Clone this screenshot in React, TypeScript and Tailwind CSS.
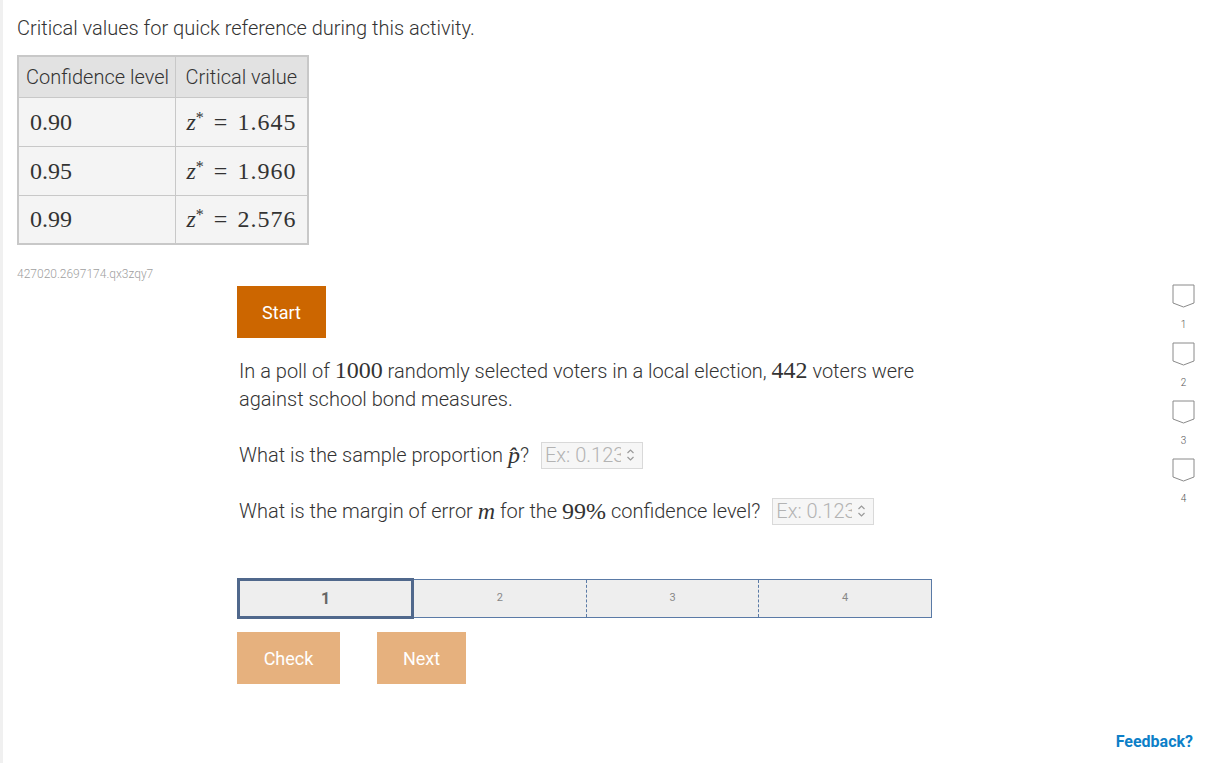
import React from "react";

const rows = [
  { level: "0.90", z: "1.645" },
  { level: "0.95", z: "1.960" },
  { level: "0.99", z: "2.576" },
];

function Bookmark({ n }: { n: number }) {
  return (
    <div className="flex flex-col items-center">
      <svg width="23" height="25" viewBox="0 0 23 25" fill="none">
        <path d="M1 1 H22 V19 L11.5 23 L1 19 Z" stroke="#8a8a8a" strokeWidth="1" fill="white" />
      </svg>
      <span className="text-[10px] text-[#555] mt-[11px] leading-none">{n}</span>
    </div>
  );
}

function AnswerBox() {
  return (
    <span className="inline-flex items-center h-[27px] w-[102px] border border-[#d9d9d9] bg-[#f6f6f6] pl-[3px] pr-[7px] text-[20px] leading-[27px] text-[#b3b3b3] overflow-hidden">
      <span className="w-[76px] overflow-hidden whitespace-nowrap">Ex: 0.123</span>
      <svg width="9" height="14" viewBox="0 0 9 14" fill="none" className="ml-auto shrink-0">
        <path d="M1.5 5 L4.5 2 L7.5 5" stroke="#9a9a9a" strokeWidth="1.2" />
        <path d="M1.5 9 L4.5 12 L7.5 9" stroke="#9a9a9a" strokeWidth="1.2" />
      </svg>
    </span>
  );
}

const math = "font-['Liberation_Serif',serif] text-[24px] leading-[28px]";

export default function App() {
  return (
    <div className="flex h-[763px] bg-white font-['Roboto',sans-serif] font-light text-[#333]">
      <div className="w-[3px] bg-[#f0f0f0] shrink-0" />
      <div className="flex-1 flex flex-col pl-[14px] pt-[15px]">
        <p className="text-[20px] leading-[26px]">Critical values for quick reference during this activity.</p>

        <table className="mt-[14px] w-[290px] table-fixed border-2 border-[#c8c8c8] border-collapse">
          <colgroup>
            <col className="w-[157px]" />
            <col className="w-[133px]" />
          </colgroup>
          <thead>
            <tr className="bg-[#e2e2e2] h-[41px]">
              <th className="border border-[#c8c8c8] px-[7px] text-left font-light text-[20px] whitespace-nowrap">Confidence level</th>
              <th className="border border-[#c8c8c8] pl-[10px] text-left font-light text-[20px] whitespace-nowrap">Critical value</th>
            </tr>
          </thead>
          <tbody>
            {rows.map((r) => (
              <tr key={r.level} className="bg-[#f4f4f4] h-[49px]">
                <td className={`border border-[#c8c8c8] px-[11px] ${math}`}>{r.level}</td>
                <td className={`border border-[#c8c8c8] pl-[11px] whitespace-nowrap ${math}`}>
                  <i>z</i>
                  <sup className="text-[16px] -top-[7px]">*</sup>
                  <span className="mx-[10px]">=</span>
                  <span className="tracking-[1px]">{r.z}</span>
                </td>
              </tr>
            ))}
          </tbody>
        </table>

        <p className="mt-[20px] text-[12px] text-[#a0a0a0]">427020.2697174.qx3zqy7</p>

        <div className="flex flex-col pl-[220px]">
          <button className="mt-[3px] w-[89px] h-[52px] bg-[#cc6600] text-white text-[18px] font-normal">Start</button>

          <p className="mt-[18px] ml-[2px] w-[690px] text-[20px] leading-[28px]">
            In a poll of <span className={math}>1000</span> randomly selected voters in a local election,{" "}
            <span className={math}>442</span> voters were against school bond measures.
          </p>

          <div className="mt-[28px] ml-[2px] flex items-center h-[28px] text-[20px] leading-[28px]">
            <span>What is the sample proportion&nbsp;</span>
            <span className={`${math} italic`}>p̂</span>
            <span className="mr-[12px]">?</span>
            <AnswerBox />
          </div>

          <div className="mt-[28px] ml-[2px] flex items-center h-[28px] text-[20px] leading-[28px]">
            <span>What is the margin of error&nbsp;</span>
            <span className={`${math} italic`}>m</span>
            <span>&nbsp;for the&nbsp;</span>
            <span className={math}>99%</span>
            <span>&nbsp;confidence level?</span>
            <span className="ml-[12px] flex">
              <AnswerBox />
            </span>
          </div>

          <div className="mt-[53px] flex w-[695px] h-[41px] items-stretch">
            <div className="w-[177px] border-[3px] border-[#50688c] bg-[#eeeeee] flex items-center justify-center text-[16px] font-bold text-[#666]">
              1
            </div>
            <div className="flex-1 flex my-[1px] border border-l-0 border-[#5a7aa6] bg-[#eeeeee] text-[11px] text-[#888] font-normal">
              <div className="flex-1 flex items-center justify-center">2</div>
              <div className="flex-1 flex items-center justify-center border-l border-dashed border-[#5a7aa6]">3</div>
              <div className="flex-1 flex items-center justify-center border-l border-dashed border-[#5a7aa6]">4</div>
            </div>
          </div>

          <div className="mt-[13px] flex gap-[37px]">
            <button className="w-[103px] h-[52px] bg-[#e6b17e] text-white text-[18px] font-normal">Check</button>
            <button className="w-[89px] h-[52px] bg-[#e6b17e] text-white text-[18px] font-normal">Next</button>
          </div>
        </div>
      </div>

      <div className="w-[60px] shrink-0 flex flex-col items-center pt-[284px] pr-[3px] relative">
        <div className="flex flex-col gap-[12px] ml-[2px]">
          <Bookmark n={1} />
          <Bookmark n={2} />
          <Bookmark n={3} />
          <Bookmark n={4} />
        </div>
        <a className="absolute right-[21px] bottom-[9px] text-[16px] font-bold text-[#0d7fc8] whitespace-nowrap">Feedback?</a>
      </div>
    </div>
  );
}
